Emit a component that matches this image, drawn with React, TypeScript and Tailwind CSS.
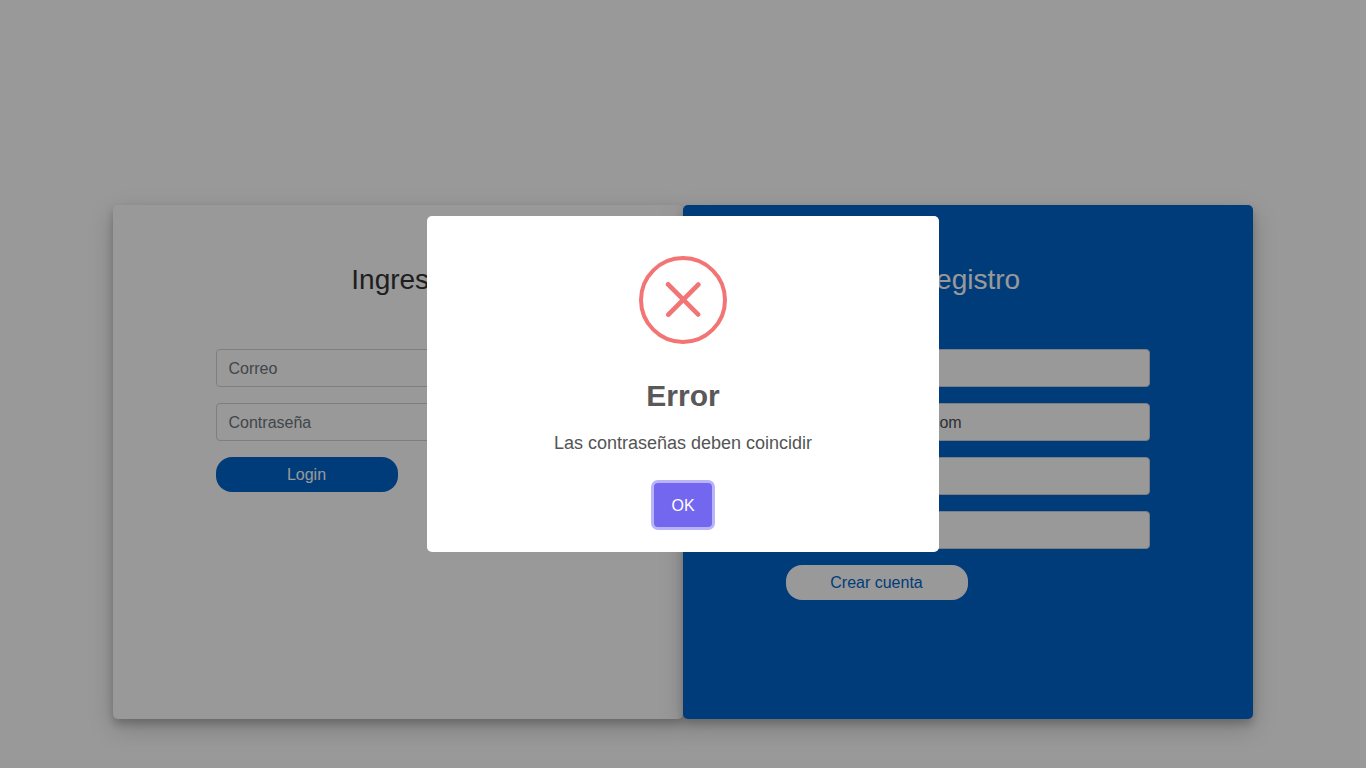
import React from "react";

const field =
  "block h-[38px] w-full rounded border border-[#ced4da] bg-white pr-3 pt-[7px] pb-[5px] text-base leading-6 text-[#495057] placeholder:text-[#6c757d] outline-none";

const cardShadow =
  "shadow-[0_5px_8px_0_rgba(0,0,0,0.2),0_9px_26px_0_rgba(0,0,0,0.19)]";

function LoginCard() {
  return (
    <section className={`h-[514px] w-[570px] rounded-[5px] px-[103px] pt-[58px] ${cardShadow}`}>
      <h3 className="mb-[52px] text-center text-[28px] leading-[34px] text-[#333]">Ingreso</h3>
      <form className="flex flex-col gap-4">
        <input className={`${field} pl-[11.5px]`} placeholder="Correo" />
        <input className={`${field} pl-[11.5px]`} placeholder="Contraseña" />
        <button type="button" className="h-[35px] w-[182px] rounded-2xl bg-[#0065cb] pr-px text-base text-white">
          Login
        </button>
      </form>
    </section>
  );
}

function RegisterCard() {
  return (
    <section className={`h-[514px] w-[570px] rounded-[5px] bg-[#0065cb] px-[103px] pt-[58px] ${cardShadow}`}>
      <h3 className="mb-[52px] text-center text-[28px] leading-[34px] text-white">Registro</h3>
      <form className="flex flex-col gap-4">
        <input className={`${field} pl-3`} />
        <input className={`${field} pl-[12.5px]`} defaultValue="fernando@google.com" />
        <input className={`${field} pl-3`} />
        <input className={`${field} pl-3`} />
        <button type="button" className="h-[35px] w-[182px] rounded-2xl bg-white pr-px text-base text-[#0065cb]">
          Crear cuenta
        </button>
      </form>
    </section>
  );
}

function ErrorDialog() {
  return (
    <div className="fixed inset-0 flex items-center justify-center bg-black/40">
      <div role="dialog" className="flex h-[336px] w-[512px] flex-col items-center rounded-[5px] bg-white pt-10">
        <svg className="h-[88px] w-[88px]" viewBox="0 0 88 88" fill="none">
          <circle cx="44" cy="44" r="42" stroke="#f27474" strokeWidth="4" />
          <g fill="#f27474">
            <rect x="20.5" y="41.25" width="47" height="4.7" rx="2" transform="rotate(45 44.3 43.6)" />
            <rect x="20.8" y="41.25" width="47" height="4.7" rx="2" transform="rotate(-45 44.3 43.6)" />
          </g>
        </svg>
        <h2 className="mt-[29px] text-[30px] leading-[45px] font-semibold text-[#595959]">Error</h2>
        <p className="mt-3 text-lg leading-[27px] text-[#545454]">Las contraseñas deben coincidir</p>
        <button
          type="button"
          className="mt-[26px] h-[44px] w-[58px] rounded-[4px] bg-[#7367f0] pt-0.5 text-base text-white shadow-[0_0_0_3px_rgba(115,103,240,0.5)]"
        >
          OK
        </button>
      </div>
    </div>
  );
}

export default function App() {
  return (
    <main className="h-screen overflow-hidden bg-white pt-[205px] font-['Liberation_Sans',sans-serif]">
      <div className="flex justify-center">
        <LoginCard />
        <RegisterCard />
      </div>
      <ErrorDialog />
    </main>
  );
}
